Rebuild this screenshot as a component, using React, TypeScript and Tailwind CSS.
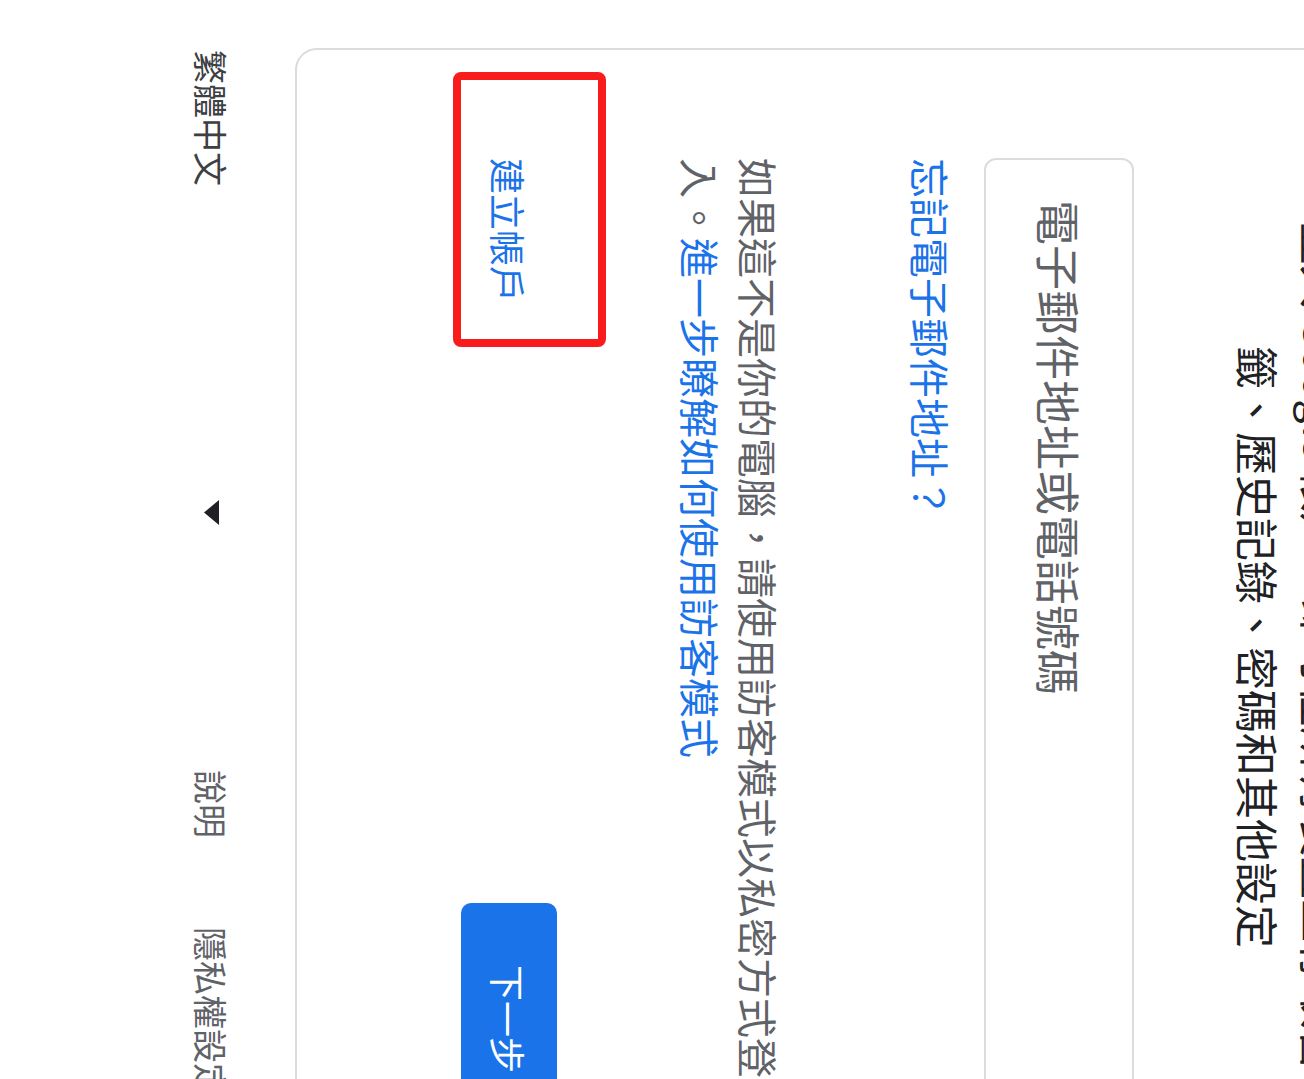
export default function App() {
  return (
    <div className="flex flex-col w-[1304px] h-[1079px] overflow-hidden bg-white text-[#202124] [writing-mode:vertical-rl] [text-orientation:sideways] [font-family:'Noto_Sans_CJK_TC','Noto_Sans',sans-serif]">
      {/* sign-in card */}
      <div className="shrink-0 -mr-[53px] mt-[48px] h-[1197px] pt-[108px] pb-[108px] pl-[164px] border-2 border-[#dadce0] rounded-[22px]">
        <p className="text-center text-[43px] leading-[64px]">
          登入 Google 帳戶，即可在所有裝置上存取書
          <br />
          籤、歷史記錄、密碼和其他設定
        </p>

        <div className="mr-[93px] w-[150px] border-2 border-[#dadce0] rounded-[12px] pt-[40px] text-[45px] leading-[146px] text-[#5f6368] whitespace-nowrap">
          電子郵件地址或電話號碼
        </div>

        <div className="mr-[25px] text-[40px] leading-[57px] text-[#1a73e8]">忘記電子郵件地址？</div>

        <p className="mr-[114px] text-[40px] leading-[58px] text-[#5f6368]">
          如果這不是你的電腦，請使用訪客模式以私密方式登
          <br />
          入。<span className="text-[#1a73e8]">進一步瞭解如何使用訪客模式</span>
        </p>

        <div className="mr-[115px] flex justify-between items-center">
          <div className="relative shrink-0 whitespace-nowrap w-[96px] leading-[96px] text-[36px] text-[#1a73e8]">
            建立帳戶
            {/* red highlight annotation */}
            <span className="absolute -left-[8px] -right-[49px] -top-[86px] -bottom-[45px] border-[8px] border-[#f81c1c] rounded-[8px]" />
          </div>
          <div className="shrink-0 whitespace-nowrap w-[96px] leading-[96px] pt-[62px] pb-[62px] rounded-[10px] bg-[#1a73e8] text-[36px] text-white">
            下一步
          </div>
        </div>
      </div>

      {/* footer */}
      <div className="shrink-0 mr-[60px] mt-[50px] flex items-center whitespace-nowrap text-[34px] leading-[48px]">
        <div className="shrink-0 flex items-center justify-between h-[475px] text-[#3c4043]">
          <span>繁體中文</span>
          <svg width="15" height="25" viewBox="0 0 15 25">
            <path d="M15 0 L0 12.5 L15 25Z" fill="#202124" />
          </svg>
        </div>
        <span className="shrink-0 mt-[245px] text-[#5f6368]">說明</span>
        <span className="shrink-0 mt-[89px] text-[#5f6368]">隱私權設定</span>
      </div>
    </div>
  )
}
